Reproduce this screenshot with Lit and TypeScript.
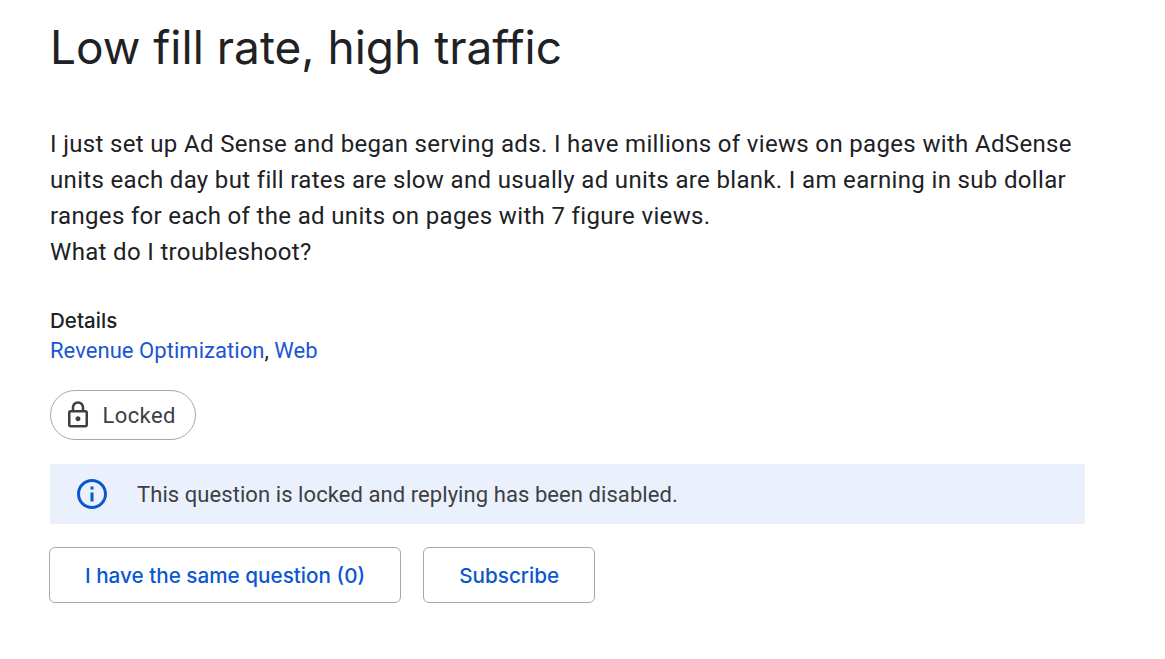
import { LitElement, html, css } from "lit";
import { customElement } from "lit/decorators.js";

@customElement("app-root")
export class AppRoot extends LitElement {
  static styles = css`
    :host { display: block; font-family: Roboto, "Liberation Sans", sans-serif; color: #202124; background: #fff; height: 659px; overflow: hidden; }
    .page { width: 1035px; margin-left: 50px; display: flex; flex-direction: column; align-items: flex-start; }
    h1 { margin: 0; padding-top: 18px; font-family: Inter, sans-serif; font-size: 46px; line-height: 58px; font-weight: 400; }
    .body { margin-top: 50px; font-size: 24px; line-height: 36px; font-weight: 400; letter-spacing: 0.34px; }
    .details { margin-top: 36px; font-size: 22px; line-height: 30px; letter-spacing: 0.05px; }
    .details-label { font-family: Inter, sans-serif; font-weight: 500; font-size: 20.5px; }
    .link { color: #1a56cf; }
    .chip { margin-top: 24px; display: flex; align-items: center; gap: 9.5px; width: 146px; height: 50px; padding: 0 0 0 12px; box-sizing: border-box; border: 1px solid #a8a8a8; border-radius: 25px; font-size: 22px; letter-spacing: 0.4px; color: #3c4043; }
    .banner { margin-top: 24px; width: 100%; height: 60px; background: #ebf1fc; display: flex; align-items: center; gap: 27px; padding-left: 24px; box-sizing: border-box; font-size: 22px; letter-spacing: 0.07px; color: #3c4043; }
    .actions { margin-top: 23px; display: flex; gap: 22px; margin-left: -1px; }
    .btn { height: 56px; padding: 0 35px; border: 1px solid #a8a8a8; border-radius: 6px; display: flex; align-items: center; font-family: Inter, sans-serif; font-size: 20.7px; font-weight: 500; color: #0b57d0; box-sizing: border-box; }
  `;
  render() {
    return html`<div class="page">
      <h1>Low fill rate, high traffic</h1>
      <div class="body">I just set up Ad Sense and began serving ads. I have millions of views on pages with AdSense<br>units each day but fill rates are slow and usually ad units are blank. I am earning in sub dollar<br>ranges for each of the ad units on pages with 7 figure views.<br>What do I troubleshoot?</div>
      <div class="details"><div class="details-label">Details</div><div><span class="link">Revenue Optimization</span>, <span class="link">Web</span></div></div>
      <div class="chip"><svg width="30" height="30" viewBox="0 0 24 24" fill="#3c4043"><path d="M18 8h-1V6c0-2.76-2.24-5-5-5S7 3.24 7 6v2H6c-1.1 0-2 .9-2 2v10c0 1.1.9 2 2 2h12c1.1 0 2-.9 2-2V10c0-1.1-.9-2-2-2zM9 6c0-1.66 1.34-3 3-3s3 1.34 3 3v2H9V6zm9 14H6V10h12v10zm-6-3c1.1 0 2-.9 2-2s-.9-2-2-2-2 .9-2 2 .9 2 2 2z"/></svg>Locked</div>
      <div class="banner"><svg width="36" height="36" viewBox="0 0 24 24" fill="#0b57d0"><path d="M11 7h2v2h-2zm0 4h2v6h-2zm1-9C6.48 2 2 6.48 2 12s4.48 10 10 10 10-4.48 10-10S17.52 2 12 2zm0 18c-4.41 0-8-3.59-8-8s3.59-8 8-8 8 3.59 8 8-3.59 8-8 8z"/></svg>This question is locked and replying has been disabled.</div>
      <div class="actions"><div class="btn">I have the same question (0)</div><div class="btn">Subscribe</div></div>
    </div>`;
  }
}
